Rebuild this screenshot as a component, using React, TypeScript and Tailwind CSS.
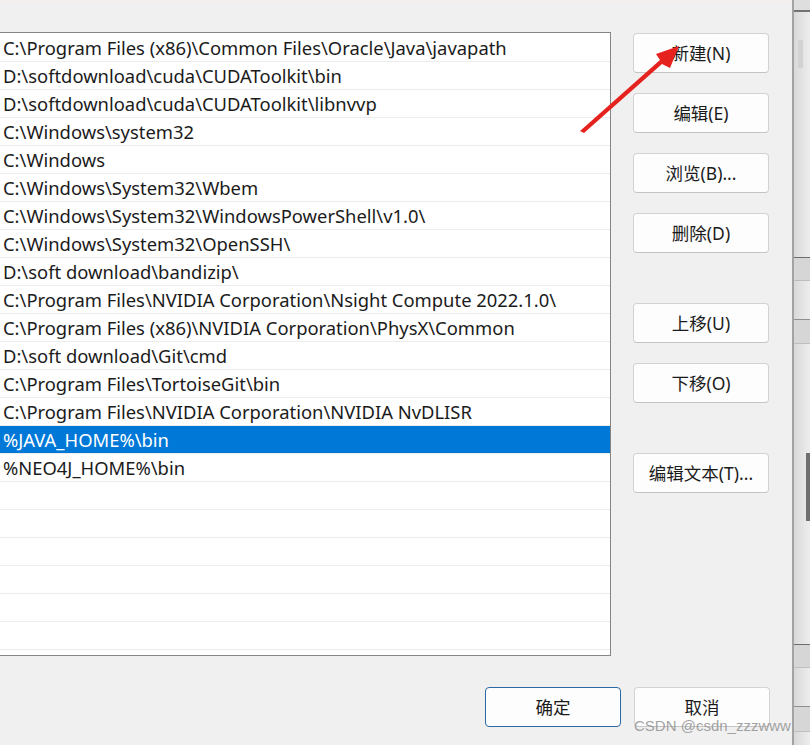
const paths = [
  'C:\\Program Files (x86)\\Common Files\\Oracle\\Java\\javapath',
  'D:\\softdownload\\cuda\\CUDAToolkit\\bin',
  'D:\\softdownload\\cuda\\CUDAToolkit\\libnvvp',
  'C:\\Windows\\system32',
  'C:\\Windows',
  'C:\\Windows\\System32\\Wbem',
  'C:\\Windows\\System32\\WindowsPowerShell\\v1.0\\',
  'C:\\Windows\\System32\\OpenSSH\\',
  'D:\\soft download\\bandizip\\',
  'C:\\Program Files\\NVIDIA Corporation\\Nsight Compute 2022.1.0\\',
  'C:\\Program Files (x86)\\NVIDIA Corporation\\PhysX\\Common',
  'D:\\soft download\\Git\\cmd',
  'C:\\Program Files\\TortoiseGit\\bin',
  'C:\\Program Files\\NVIDIA Corporation\\NVIDIA NvDLISR',
  '%JAVA_HOME%\\bin',
  '%NEO4J_HOME%\\bin',
  '',
  '',
  '',
  '',
  '',
  '',
  '',
];

const SELECTED = 14;

const WinButton = ({ label, primary }: { label: string; primary?: boolean }) => (
  <button
    className={`h-[40px] w-[136px] rounded-[4px] border bg-[#fdfdfd] text-[17.5px] text-[#1b1b1b] ${
      primary ? 'border-[#2a6aa4]' : 'border-[#d3d3d3] border-b-[#c4c4c4]'
    }`}
  >
    {label}
  </button>
);

// neighbouring window peeking out on the right
const SideStrip = () => (
  <div className="flex w-[18px] shrink-0">
    <div className="w-[2px] bg-[#a3a3a3]" />
    <div className="flex flex-1 flex-col bg-gradient-to-r from-[#d9d9d9] to-[#ededed]">
      <div className="h-[10px] bg-[#dedede]" />
      <div className="h-[2px] bg-[#747474]" />
      <div className="flex h-[245px] flex-col">
        <div className="ml-[4px] mt-[28px] h-[28px] w-[5px] bg-[#d2d2d2]" />
      </div>
      <div className="h-px bg-[#6c6c6c]" />
      <div className="h-[22px] bg-[#d6d6d6]" />
      <div className="h-px bg-[#bdbdbd]" />
      <div className="h-[38px]" />
      <div className="h-px bg-[#8f8f8f]" />
      <div className="h-[23px] bg-[#d6d6d6]" />
      <div className="h-px bg-[#bdbdbd]" />
      <div className="flex h-[300px] flex-col items-end">
        <div className="h-[109px]" />
        <div className="h-[68px] w-[4px] bg-[#707070]" />
      </div>
      <div className="h-px bg-[#6c6c6c]" />
      <div className="h-[22px] bg-[#d6d6d6]" />
      <div className="h-px bg-[#c0c0c0]" />
      <div className="h-[38px]" />
      <div className="h-px bg-[#8f8f8f]" />
      <div className="h-[24px] bg-[#d6d6d6]" />
      <div className="h-px bg-[#c0c0c0]" />
      <div className="flex-1" />
    </div>
  </div>
);

export default function App() {
  return (
    <div
      className="relative flex h-[745px] w-[810px] overflow-hidden bg-[#f0f0f0] text-[#1b1b1b]"
      style={{ fontFamily: '"Noto Sans", "Noto Sans CJK SC", sans-serif' }}
    >
      <div className="flex w-[792px] flex-col border-t border-t-[#f6eeeb]">
        <div className="mt-[31px] flex">
          {/* path list */}
          <div className="-ml-px h-[624px] w-[612px] overflow-hidden border border-[#858585] bg-white pt-px">
            {paths.map((p, i) => (
              <div
                key={i}
                className={`h-[28px] border-b border-[#ececec] pl-[3px] text-[18.4px] leading-[27px] whitespace-nowrap ${
                  i === SELECTED ? 'bg-[#0078d7] text-white' : ''
                }`}
              >
                {p}
              </div>
            ))}
          </div>

          {/* action buttons */}
          <div className="ml-[22px] flex flex-col gap-5 pt-px">
            <WinButton label="新建(N)" />
            <WinButton label="编辑(E)" />
            <WinButton label="浏览(B)..." />
            <WinButton label="删除(D)" />
            <div className="h-[10px]" />
            <WinButton label="上移(U)" />
            <WinButton label="下移(O)" />
            <div className="h-[10px]" />
            <WinButton label="编辑文本(T)..." />
          </div>
        </div>

        <div className="mt-[31px] flex justify-end gap-[13px] pr-[22px]">
          <WinButton label="确定" primary />
          <WinButton label="取消" />
        </div>
      </div>

      <SideStrip />

      {/* red annotation arrow */}
      <svg className="pointer-events-none absolute left-0 top-0" width="810" height="745">
        <polygon
          points="580,131 584,133 662,64 670,68 679,46 656,54 660,60"
          fill="#e6221e"
        />
      </svg>

      {/* watermark */}
      <div
        className="pointer-events-none absolute left-[634px] top-[716px] text-[15px] leading-[20px] text-[#8c8c8c]/80"
        style={{ fontFamily: '"Liberation Sans", sans-serif' }}
      >
        CSDN @csdn_zzzwww
      </div>
    </div>
  );
}
